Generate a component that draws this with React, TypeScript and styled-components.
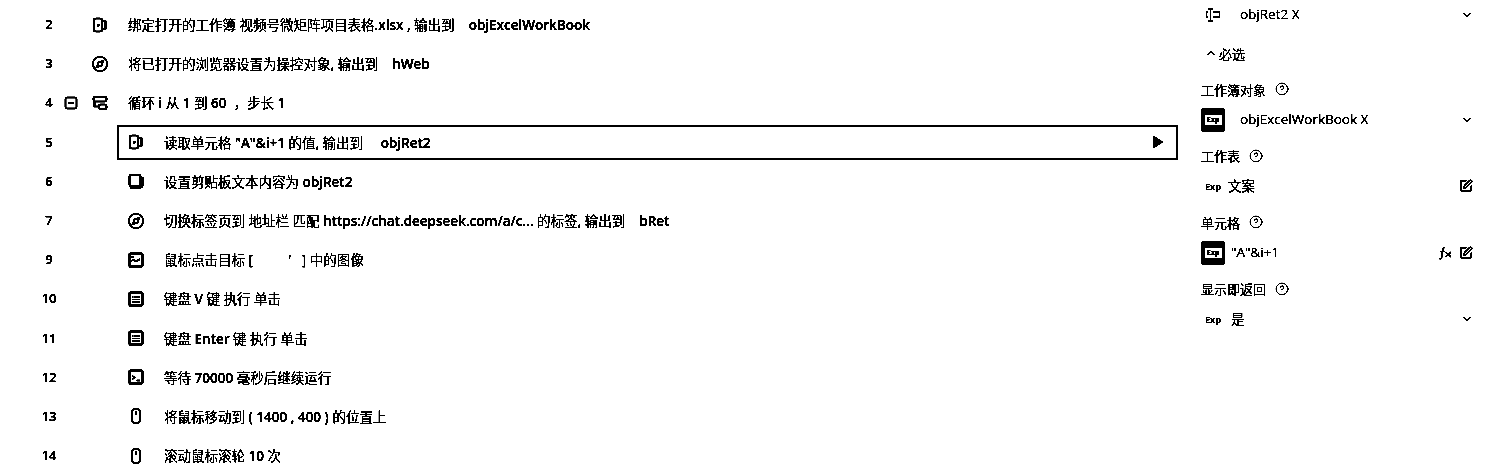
import React from "react"
import styled, { createGlobalStyle } from "styled-components"
import { ChevronDown, ChevronUp, CircleHelp, SquarePen } from "lucide-react"

const GlobalStyle = createGlobalStyle`
html, body {
  margin: 0;
  padding: 0;
  background: #fff;
}
body {
  font-family: "Open Sans", "Noto Sans CJK SC", sans-serif;
  color: #000;
}
`

type IconName = "sheet" | "compass" | "loop" | "copy" | "image" | "keyboard" | "terminal" | "mouse"

const StepIcon = ({ name }: { name: IconName }) => {
  const common = { width: 18, height: 18, viewBox: "0 0 18 18", fill: "none", stroke: "#000", strokeWidth: 1.6 }
  switch (name) {
    case "sheet":
      return (
        <svg {...common}>
          <rect x="3" y="2.5" width="8" height="13" rx="1.5" />
          <path d="M11 5 H14.5 V13 H11" />
          <rect x="6" y="8" width="2.4" height="2.4" fill="#000" stroke="none" />
        </svg>
      )
    case "compass":
      return (
        <svg {...common}>
          <circle cx="9" cy="9" r="7.2" />
          <path d="M12.3 5.7 L10.6 10.6 L5.7 12.3 L7.4 7.4 Z" />
        </svg>
      )
    case "loop":
      return (
        <svg {...common}>
          <rect x="2.5" y="3" width="13" height="4.5" rx="1.2" />
          <rect x="8" y="10.5" width="7.5" height="4.5" rx="1.2" />
          <path d="M3.5 7.5 V12.5 H8" />
        </svg>
      )
    case "copy":
      return (
        <svg {...common} strokeWidth={1.7}>
          <rect x="2.5" y="3" width="11" height="11" rx="1.4" />
          <path d="M3 15.7 H13 Q15.5 15.7 15.5 13 V5" />
        </svg>
      )
    case "image":
      return (
        <svg {...common}>
          <rect x="2.5" y="2.5" width="13" height="13" rx="0.8" strokeWidth={1.9} />
          <path d="M3 11.5 L6 8.5 L9 10.5 L13 8" />
          <path d="M5.5 5 V7" />
        </svg>
      )
    case "keyboard":
      return (
        <svg {...common}>
          <rect x="2.5" y="2.5" width="13" height="13" rx="0.8" strokeWidth={1.9} />
          <path d="M5 7 H13 M5 9.5 H13" strokeDasharray="1.5 0.6" strokeWidth={1.1} />
          <path d="M5 12 H13" strokeWidth={1.2} />
        </svg>
      )
    case "terminal":
      return (
        <svg {...common}>
          <rect x="2.5" y="2.5" width="13" height="13" rx="0.8" strokeWidth={1.9} />
          <path d="M5 7.5 L7.5 9.5 L5 11.5 M9.5 12.5 H13" />
        </svg>
      )
    case "mouse":
      return (
        <svg {...common}>
          <rect x="5" y="1.5" width="8" height="15" rx="4" />
          <path d="M9 4.5 V7.5" />
        </svg>
      )
  }
}

const FoldIcon = () => (
  <svg width="14" height="14" viewBox="0 0 14 14" fill="none" stroke="#000" strokeWidth="1.5">
    <rect x="1.5" y="1.5" width="11" height="11" rx="1" />
    <path d="M4.5 7 H9.5" />
  </svg>
)

const PlayIcon = () => (
  <svg width="12" height="14" viewBox="0 0 12 14">
    <path d="M1 0.5 L11.5 7 L1 13.5 Z" fill="#000" />
  </svg>
)

const VarIcon = () => (
  <svg width="18" height="18" viewBox="0 0 18 18" fill="none" stroke="#000" strokeWidth="1.3">
    <path d="M3 3 H8 M3 15 H8 M5.5 3 V15" />
    <path d="M8 6 H14.5 V11 H8" />
    <path d="M3 6 H1.5 V11 H3" />
  </svg>
)

const FxIcon = () => (
  <svg width="14" height="14" viewBox="0 0 14 14" fill="none" stroke="#000" strokeWidth="1.3">
    <path d="M6.5 1.5 C5 1.5 4.8 3 4.5 5.5 L3.8 11 C3.5 12.8 2.5 13 1 12.5" />
    <path d="M2.5 5.5 H7" />
    <path d="M7.5 6 L13 11 M13 6 L7.5 11" />
  </svg>
)

type Step = {
  no: number
  icon: IconName
  text: string
  level: number
  fold?: boolean
  selected?: boolean
}

const sp = (n: number) => "\u00a0".repeat(n)

const steps: Step[] = [
  { no: 2, icon: "sheet", level: 0, text: `绑定打开的工作簿 视频号微矩阵项目表格.xlsx , 输出到${sp(4)}objExcelWorkBook` },
  { no: 3, icon: "compass", level: 0, text: `将已打开的浏览器设置为操控对象, 输出到${sp(4)}hWeb` },
  { no: 4, icon: "loop", level: 0, fold: true, text: "循环 i 从 1 到 60  ，步长 1" },
  { no: 5, icon: "sheet", level: 1, selected: true, text: `读取单元格 "A"&i+1 的值, 输出到${sp(5)}objRet2` },
  { no: 6, icon: "copy", level: 1, text: "设置剪贴板文本内容为 objRet2" },
  { no: 7, icon: "compass", level: 1, text: `切换标签页到 地址栏 匹配 https://chat.deepseek.com/a/c... 的标签, 输出到${sp(4)}bRet` },
  { no: 9, icon: "image", level: 1, text: `鼠标点击目标 [${sp(10)}'${sp(3)}] 中的图像` },
  { no: 10, icon: "keyboard", level: 1, text: "键盘 V 键 执行 单击" },
  { no: 11, icon: "keyboard", level: 1, text: "键盘 Enter 键 执行 单击" },
  { no: 12, icon: "terminal", level: 1, text: "等待 70000 毫秒后继续运行" },
  { no: 13, icon: "mouse", level: 1, text: "将鼠标移动到 ( 1400 , 400 ) 的位置上" },
  { no: 14, icon: "mouse", level: 1, text: "滚动鼠标滚轮 10 次" },
]

// latin runs are heavier than the chinese text around them
const withLatin = (text: string) =>
  text.split(/([\x21-\x7e]+)/).map((part, i) => (i % 2 ? <Latin key={i}>{part}</Latin> : part))

const App = () => {
  return (
    <Page>
      <GlobalStyle />
      <StepList>
        {steps.map((s) => (
          <Row key={s.no}>
            <RowNo>{s.no}</RowNo>
            <FoldSlot>{s.fold && <FoldIcon />}</FoldSlot>
            <StepBox $level={s.level} $selected={s.selected}>
              <IconSlot>
                <StepIcon name={s.icon} />
              </IconSlot>
              <StepText>{withLatin(s.text)}</StepText>
              {s.selected && (
                <RunButton>
                  <PlayIcon />
                </RunButton>
              )}
            </StepBox>
          </Row>
        ))}
      </StepList>

      <SidePanel>
        <ValueRow $indent>
          <VarSlot>
            <VarIcon />
          </VarSlot>
          <TagText>objRet2 X</TagText>
          <Tools>
            <ChevronDown size={12} strokeWidth={2.4} />
          </Tools>
        </ValueRow>

        <SectionTitle>
          <ChevronUp size={12} strokeWidth={2.6} />
          必选
        </SectionTitle>

        <Field>
          <Label>
            工作簿对象
            <CircleHelp size={14} strokeWidth={1.6} />
          </Label>
          <ValueRow>
            <ExpBadge>
              <ExpBand>Exp</ExpBand>
            </ExpBadge>
            <TagText $gap={15}>objExcelWorkBook X</TagText>
            <Tools>
              <ChevronDown size={12} strokeWidth={2.4} />
            </Tools>
          </ValueRow>
        </Field>

        <Field>
          <Label>
            工作表
            <CircleHelp size={14} strokeWidth={1.6} />
          </Label>
          <ValueRow $indent>
            <ExpText>Exp</ExpText>
            <PlainValue>文案</PlainValue>
            <Tools>
              <SquarePen size={14} strokeWidth={2.2} />
            </Tools>
          </ValueRow>
        </Field>

        <Field>
          <Label>
            单元格
            <CircleHelp size={14} strokeWidth={1.6} />
          </Label>
          <ValueRow>
            <ExpBadge>
              <ExpBand>Exp</ExpBand>
            </ExpBadge>
            <PlainValue $gap={6}>"A"&i+1</PlainValue>
            <Tools>
              <FxIcon />
              <SquarePen size={14} strokeWidth={2.2} />
            </Tools>
          </ValueRow>
        </Field>

        <Field>
          <Label>
            显示即返回
            <CircleHelp size={14} strokeWidth={1.6} />
          </Label>
          <ValueRow $indent>
            <ExpText>Exp</ExpText>
            <PlainValue $gap={3}>是</PlainValue>
            <Tools>
              <ChevronDown size={12} strokeWidth={2.4} />
            </Tools>
          </ValueRow>
        </Field>
      </SidePanel>
    </Page>
  )
}

export default App

const Page = styled.div`
display: flex;
height: 475px;
overflow: hidden;
background: #fff;
filter: grayscale(1) brightness(0.66) contrast(30);
`

const StepList = styled.div`
width: 1178px;
flex-shrink: 0;
padding-top: 5px;
`

const Row = styled.div`
display: flex;
align-items: center;
height: 39.2px;
`

const RowNo = styled.div`
width: 30px;
margin-left: 34px;
text-align: center;
font-size: 13px;
font-weight: 600;
padding-bottom: 1px;
`

const FoldSlot = styled.div`
width: 16px;
margin-left: -1px;
display: flex;
justify-content: center;
`

const StepBox = styled.div<{ $level: number; $selected?: boolean }>`
flex: 1;
display: flex;
align-items: center;
box-sizing: border-box;
height: 35px;
margin-left: ${(p) => (p.$level ? 38 : 2)}px;
padding-left: 8px;
padding-right: 12px;
border: 2px solid ${(p) => (p.$selected ? "#000" : "transparent")};
`

const IconSlot = styled.div`
width: 18px;
height: 18px;
margin-right: 19px;
display: flex;
`

const StepText = styled.div`
font-size: 13.5px;
white-space: pre;
padding-bottom: 1px;
`

const Latin = styled.span`
font-weight: 600;
`

const RunButton = styled.div`
margin-left: auto;
display: flex;
`

const SidePanel = styled.div`
flex: 1;
box-sizing: border-box;
padding: 3px 13px 0 23px;
font-size: 13px;
`

const ValueRow = styled.div<{ $indent?: boolean }>`
display: flex;
align-items: center;
height: 24px;
padding-left: ${(p) => (p.$indent ? 4 : 0)}px;
`

const VarSlot = styled.div`
width: 18px;
height: 18px;
margin-right: 17px;
`

const TagText = styled.div<{ $gap?: number }>`
margin-left: ${(p) => p.$gap ?? 0}px;
font-size: 13.5px;
font-weight: 500;
padding-bottom: 2px;
`

const Tools = styled.div`
margin-left: auto;
display: flex;
align-items: center;
gap: 7px;
`

const SectionTitle = styled.div`
display: flex;
align-items: center;
gap: 2px;
height: 24px;
margin-top: 14px;
padding-left: 4px;
`

const Field = styled.div`
display: flex;
flex-direction: column;
gap: 8px;
margin-top: 16.5px;
`

const Label = styled.div`
display: flex;
align-items: center;
gap: 9px;
box-sizing: border-box;
height: 18px;
padding-bottom: 3px;
`

const ExpBadge = styled.div`
width: 24px;
height: 24px;
border-radius: 3px;
background: #000;
display: flex;
align-items: center;
justify-content: center;
flex-shrink: 0;
`

const ExpBand = styled.div`
width: 17px;
height: 10px;
background: #fff;
color: #000;
font-size: 7px;
font-weight: 700;
line-height: 10px;
text-align: center;
`

const ExpText = styled.div`
font-size: 9px;
font-weight: 700;
width: 20px;
margin-right: 3px;
`

const PlainValue = styled.div<{ $gap?: number }>`
margin-left: ${(p) => p.$gap ?? 0}px;
font-size: 13.5px;
padding-bottom: 2px;
`
